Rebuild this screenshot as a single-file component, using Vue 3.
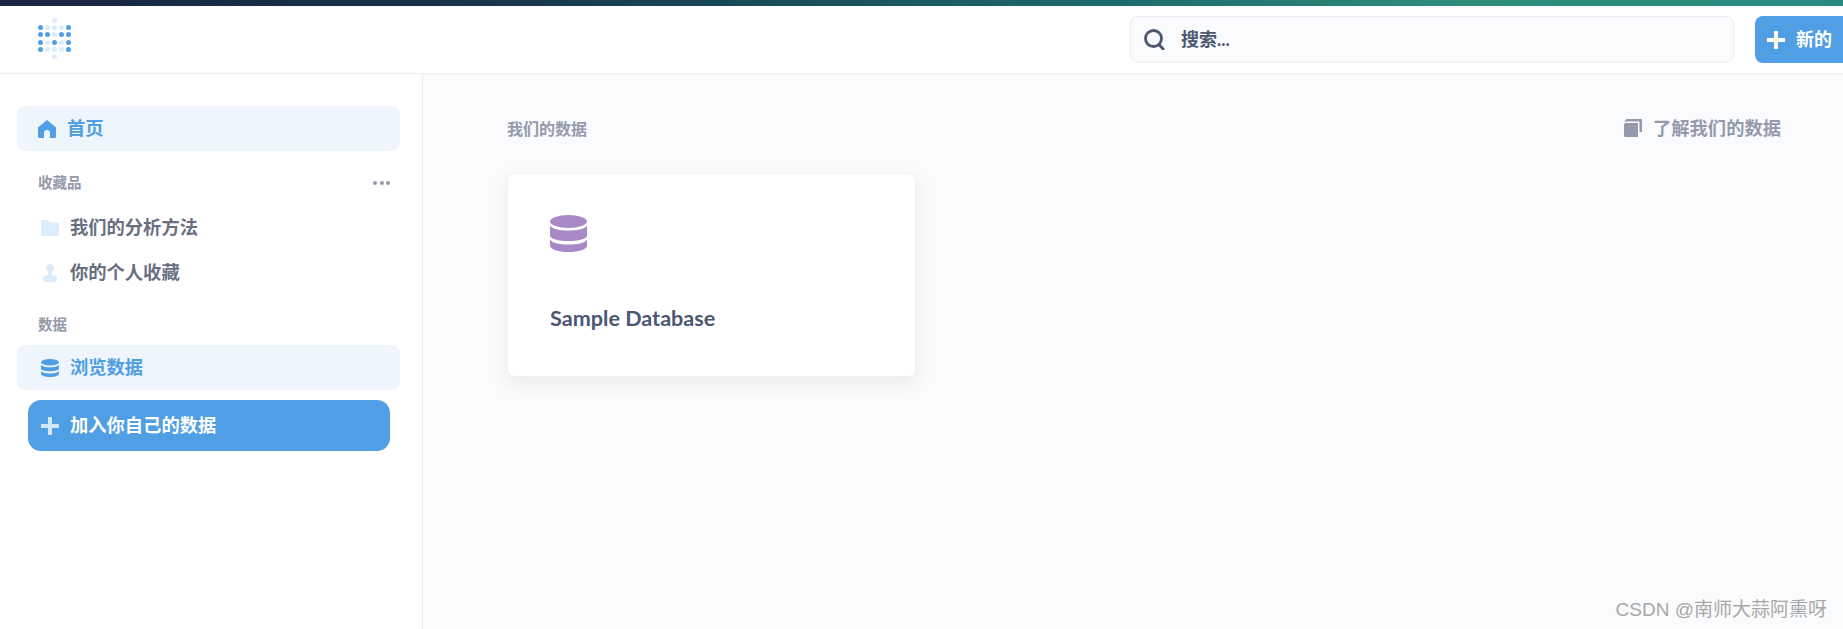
<script setup>
const rows = [
  [0,0,2,0,0],
  [1,2,2,2,1],
  [1,1,2,1,1],
  [1,2,1,2,1],
  [1,2,2,2,1],
  [0,0,2,0,0],
]
</script>

<template>
  <div class="page">
    <div class="stripe"></div>
    <header class="topbar">
      <div class="logo">
        <div v-for="(row, r) in rows" :key="r" class="logo-row">
          <i v-for="(c, k) in row" :key="k" class="dot" :class="{ strong: c === 1, pale: c === 2 }"></i>
        </div>
      </div>
      <div class="search">
        <svg class="search-icon" viewBox="0 0 21 21"><circle cx="9.500" cy="9.500" r="8" fill="none" stroke="#4c5773" stroke-width="2.800"/><path d="M15 15.500 20 21" stroke="#4c5773" stroke-width="2.800" fill="none"/></svg>
        <span class="lift">搜索...</span>
      </div>
      <button class="new">
        <svg class="plus" viewBox="0 0 18 18"><path d="M7 0h4v7h7v4h-7v7H7v-7H0V7h7z" fill="#fff"/></svg>
        <span class="lift-sm">新的</span>
      </button>
    </header>
    <div class="body">
      <aside class="sidebar">
        <a class="item active home">
          <svg class="ic home-ic" viewBox="0 0 18 18"><path d="M9 0 18 7.600V16.500a1.500 1.500 0 0 1-1.500 1.500H12v-5a3 3 0 0 0-6 0v5H1.500A1.500 1.500 0 0 1 0 16.500V7.600z" fill="#509ee3"/></svg>
          <span class="lift-sm">首页</span>
        </a>
        <div class="sec first">
          <span class="lift">收藏品</span>
          <span class="dots"><i></i><i></i><i></i></span>
        </div>
        <a class="item">
          <svg class="ic" viewBox="0 0 18 16"><path d="M1.500 0h5.200l2 2.400h7.800A1.500 1.500 0 0 1 18 4v10.500a1.500 1.500 0 0 1-1.500 1.500h-15A1.500 1.500 0 0 1 0 14.500V1.500A1.500 1.500 0 0 1 1.500 0z" fill="#ddecfa"/></svg>
          <span class="lift-sm">我们的分析方法</span>
        </a>
        <a class="item">
          <svg class="ic" viewBox="0 0 18 19"><path d="M9 0a4 4 0 0 1 4 4.500c0 2-.9 3.700-2 4.600v2.200c2.500.3 5.500 1.400 5.500 4 0 2-1.500 3.700-3 3.700h-9c-1.500 0-3-1.700-3-3.700 0-2.600 3-3.700 5.500-4V9.100c-1.100-.9-2-2.600-2-4.600A4 4 0 0 1 9 0z" fill="#ddecfa"/></svg>
          <span class="lift-sm">你的个人收藏</span>
        </a>
        <div class="sec second"><span class="lift">数据</span></div>
        <a class="item active">
          <svg class="ic" viewBox="0 0 18 18"><ellipse cx="9" cy="3.200" rx="9" ry="3.200" fill="#509ee3"/><path d="M0 6c1.500 1.700 5 2.300 9 2.300s7.500-.6 9-2.300v3.500C18 11.200 14 12.300 9 12.300S0 11.200 0 9.500zM0 12.300c1.500 1.700 5 2.200 9 2.200s7.500-.5 9-2.200v2.500C18 16.700 14 18 9 18s-9-1.300-9-3.200z" fill="#509ee3"/></svg>
          <span class="lift-sm">浏览数据</span>
        </a>
        <a class="add">
          <svg class="ic" viewBox="0 0 18 18"><path d="M7 0h4v7h7v4h-7v7H7v-7H0V7h7z" fill="#d3e6f8"/></svg>
          <span class="lift-sm">加入你自己的数据</span>
        </a>
      </aside>
      <main class="content">
        <div class="heading">
          <span class="title">我们的数据</span>
          <span class="learn">
            <svg class="book" viewBox="0 0 18 18"><path d="M3 0H18V13H15.500V2.500H3C2 2.500 1.200 2.800.6 3.400 .8 1.400 1.800 0 3 0z" fill="#949aab"/><path d="M1.500 4H14V18H1.500A1.500 1.500 0 0 1 0 16.500v-11A1.500 1.500 0 0 1 1.500 4z" fill="#949aab"/></svg>
            <span class="lift-sm">了解我们的数据</span>
          </span>
        </div>
        <article class="card">
          <svg class="db" viewBox="0 0 37 37"><ellipse cx="18.500" cy="6.500" rx="18.500" ry="6.500" fill="#a989c5"/><path d="M0 10.500C2.500 14.500 10 15.500 18.500 15.500S34.500 14.500 37 10.500V20.500C37 24 28.500 26 18.500 26S0 24 0 20.500zM0 24.500C2.500 28.500 10 29.500 18.500 29.500S34.500 28.500 37 24.500V30.500C37 34.500 28.500 37 18.500 37S0 34.500 0 30.500z" fill="#a989c5"/></svg>
          <h3>Sample Database</h3>
        </article>
      </main>
    </div>
    <div class="watermark">CSDN @南师大蒜阿熏呀</div>
  </div>
</template>

<style scoped>
.page {
  position: relative;
  width: 1843px;
  height: 629px;
  overflow: hidden;
  display: flex;
  flex-direction: column;
  background: #f9fbfc;
  font-family: Lato, "Noto Sans CJK SC", sans-serif;
}
.lift { padding-bottom: 4px; }
.lift-sm { padding-bottom: 3px; }
.stripe {
  height: 6px;
  flex: none;
  background: linear-gradient(90deg, #1a2444 0%, #17324b 25%, #1c6a6b 60%, #2f8f7c 80%, #2a8a80 100%);
}
.topbar {
  height: 68px;
  flex: none;
  box-sizing: border-box;
  display: flex;
  align-items: center;
  background: #fff;
  border-bottom: 1px solid #eeeeef;
  padding: 0 0 0 38px;
}
.logo { display: flex; flex-direction: column; width: 33px; margin-bottom: 2px; }
.logo-row { display: flex; justify-content: space-between; height: 7.400px; align-items: center; }
.dot { width: 5px; height: 5px; border-radius: 50%; background: transparent; }
.dot.strong { background: #509ee3; }
.dot.pale { background: #ddecfa; }
.search {
  margin-left: 1059px;
  width: 605px;
  height: 47px;
  box-sizing: border-box;
  border: 1px solid #eeecf1;
  border-radius: 8px;
  background: #f9fbfc;
  display: flex;
  align-items: center;
  padding-left: 13px;
  color: #4c5773;
  font-weight: 700;
  font-size: 18px;
}
.search-icon { width: 21px; height: 21px; margin-right: 16px; }
.new {
  margin-left: 21px;
  width: 88px;
  height: 47px;
  border: 0;
  padding: 0 0 0 12px;
  display: flex;
  align-items: center;
  gap: 11px;
  background: #509ee3;
  border-radius: 8px 0 0 8px;
  color: #fff;
  font: 700 18px Lato, "Noto Sans CJK SC", sans-serif;
}
.plus { width: 18px; height: 18px; }
.body { flex: 1; display: flex; min-height: 0; }
.sidebar {
  width: 423px;
  flex: none;
  box-sizing: border-box;
  background: #fff;
  border-right: 1px solid #eeecf1;
  padding: 32px 22px 0 17px;
  display: flex;
  flex-direction: column;
}
.item {
  height: 45px;
  flex: none;
  display: flex;
  align-items: center;
  padding-left: 24px;
  border-radius: 8px;
  color: #696f82;
  font-weight: 700;
  font-size: 18.300px;
}
.item.active { background: #eef5fc; color: #509ee3; }
.ic { width: 18px; height: 18px; margin-right: 11px; flex: none; }
.home { padding-left: 21px; }
.home-ic { margin-right: 11px; }
.sec {
  display: flex;
  justify-content: space-between;
  align-items: center;
  padding: 0 10px 0 21px;
  color: #949aab;
  font-weight: 700;
  font-size: 14.500px;
  height: 20px;
  flex: none;
}
.sec.first { margin-top: 22px; margin-bottom: 12px; }
.sec.second { margin-top: 20px; margin-bottom: 10px; }
.dots { display: flex; gap: 2.300px; }
.dots i { width: 4px; height: 4px; border-radius: 50%; background: #949aab; }
.add {
  margin: 10px 10px 0 11px;
  height: 51px;
  flex: none;
  display: flex;
  align-items: center;
  padding-left: 13px;
  border-radius: 13px;
  background: #509ee3;
  color: #fff;
  font-weight: 700;
  font-size: 18.300px;
}
.content { flex: 1; padding: 0 62px 0 84px; min-width: 0; }
.heading {
  display: flex;
  justify-content: space-between;
  align-items: center;
  height: 20px;
  margin-top: 44px;
}
.title { color: #949aab; font-weight: 700; font-size: 16px; }
.learn { display: flex; align-items: center; gap: 11px; color: #949aab; font-weight: 700; font-size: 18.300px; }
.book { width: 18px; height: 18px; }
.card {
  margin: 35px 0 0;
  width: 409px;
  height: 204px;
  box-sizing: border-box;
  background: #fff;
  border: 1px solid #f1f2f4;
  border-radius: 8px;
  box-shadow: 0 7px 20px rgba(0, 0, 0, 0.07);
  padding: 41px 0 0 42px;
}
.db { display: block; width: 37px; height: 37px; }
.card h3 {
  margin: 53px 0 0;
  font-size: 21.600px;
  line-height: 26px;
  font-weight: 700;
  color: #4c5773;
}
.watermark {
  position: absolute;
  right: 16px;
  top: 599px;
  font: 19px/22px "Liberation Sans", "Noto Sans CJK SC", sans-serif;
  color: #a8a8a8;
  white-space: nowrap;
}
</style>
